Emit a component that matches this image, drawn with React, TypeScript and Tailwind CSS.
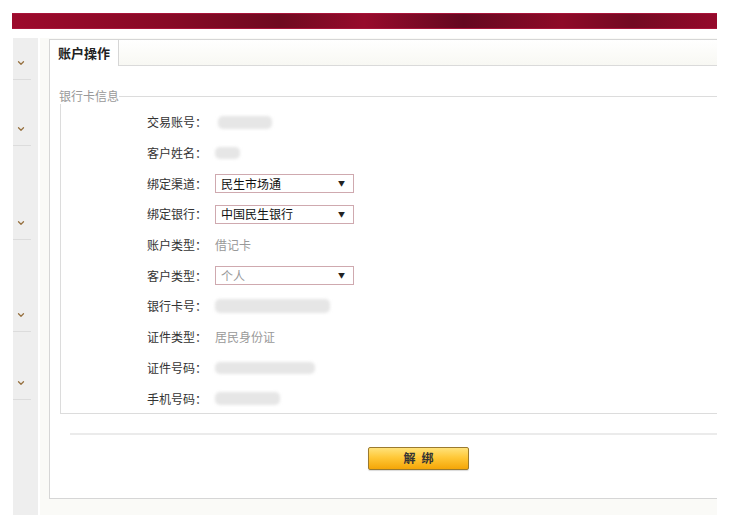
import React from "react"
import { ChevronDown } from "lucide-react"

const FONT = "font-['Noto_Sans_CJK_SC','Liberation_Sans',sans-serif]"

interface RowProps {
    label: string
    children?: React.ReactNode
}

function Row({ label, children }: RowProps) {
    return (
        <div className="flex items-center h-[30.7px]">
            <div className="w-[146px] text-right text-[12px] text-[#333]">{label}</div>
            <div className="ml-[8px] flex items-center">{children}</div>
        </div>
    )
}

function Blur({ w, h = 13 }: { w: number; h?: number }) {
    return <div className="bg-[#e6e6e6] rounded-[5px] blur-[1.5px]" style={{ width: w, height: h }} />
}

function Select({ value, muted }: { value: string; muted?: boolean }) {
    return (
        <div className="w-[139px] h-[19px] border border-[#cfa9af] bg-white flex items-center justify-between pl-[5px] pr-[8px]">
            <span className={muted ? "text-[12px] text-[#999]" : "text-[12px] text-[#111]"}>{value}</span>
            <span className="text-[7px] text-[#222] leading-none">▼</span>
        </div>
    )
}

const sideItems = [42, 66, 94, 92, 68]

export default function App() {
    return (
        <div className={`w-[750px] h-[515px] bg-white overflow-hidden ${FONT}`}>
            <div className="h-[13px]" />
            <div className="ml-[12px] w-[705px] h-[16px] border-y border-[#a8143a] bg-[linear-gradient(90deg,#9c0a2c_0%,#880a26_22%,#6f0a20_38%,#970b2c_50%,#650820_64%,#8e0a28_78%,#730a22_88%,#95092b_100%)]" />
            <div className="h-[9px]" />

            <div className="flex ml-[13px] w-[704px] h-[477px]">
                {/* sidebar */}
                <div className="w-[25px] bg-[#eeeeee] flex flex-col">
                    {sideItems.map((h, i) => (
                        <div
                            key={i}
                            className="flex flex-col justify-end items-start border-b border-[#dcdcdc] w-[18px] pb-[11px] pl-[3px]"
                            style={{ height: h }}
                        >
                            <ChevronDown className="w-[10px] h-[10px] text-[#96703f]" strokeWidth={3} />
                        </div>
                    ))}
                </div>
                <div className="w-[2px] bg-white" />
                <div className="w-[9px] bg-[#fafaf7]" />

                {/* main */}
                <div className="flex-1 flex flex-col bg-[#fafaf7] pt-[1px]">
                    <div className="h-[460px] border border-r-0 border-[#d6d6d6] bg-white flex flex-col">
                        {/* tab header */}
                        <div className="h-[26px] flex bg-[linear-gradient(180deg,#ffffff,#f8f8f3)] border-b border-[#dadada]">
                            <div className="w-[69px] h-[26px] bg-white border-r border-[#d6d6d6] -mb-[1px] flex items-center pl-[8px] text-[13px] font-bold text-[#222]">
                                账户操作
                            </div>
                        </div>

                        {/* fieldset */}
                        <fieldset className="mt-[22px] ml-[10px] border border-r-0 border-[#dcdcdc] h-[326px]">
                            <legend className="-ml-[2px] text-[12px] leading-[16px] text-[#999]">银行卡信息</legend>
                            <div className="pt-[3px]">
                                <Row label="交易账号：">
                                    <div className="ml-[3px]"><Blur w={54} /></div>
                                </Row>
                                <Row label="客户姓名：">
                                    <Blur w={25} h={12} />
                                </Row>
                                <Row label="绑定渠道：">
                                    <Select value="民生市场通" />
                                </Row>
                                <Row label="绑定银行：">
                                    <Select value="中国民生银行" />
                                </Row>
                                <Row label="账户类型：">
                                    <span className="text-[12px] text-[#999]">借记卡</span>
                                </Row>
                                <Row label="客户类型：">
                                    <Select value="个人" muted />
                                </Row>
                                <Row label="银行卡号：">
                                    <Blur w={115} h={14} />
                                </Row>
                                <Row label="证件类型：">
                                    <span className="text-[12px] text-[#999]">居民身份证</span>
                                </Row>
                                <Row label="证件号码：">
                                    <Blur w={100} h={12} />
                                </Row>
                                <Row label="手机号码：">
                                    <Blur w={65} h={13} />
                                </Row>
                            </div>
                        </fieldset>

                        <div className="mt-[19px] ml-[20px] h-[2px] bg-[#ebebeb]" />

                        <div className="mt-[9px] ml-[318px]">
                            <button className="w-[101px] h-[23px] rounded-[2px] border border-[#9b7a2e] bg-[linear-gradient(180deg,#ffe27a_0%,#ffc838_45%,#f5a607_100%)] text-[12px] font-bold text-[#333] tracking-[6px] pl-[6px] shadow-[0_1px_1px_rgba(0,0,0,0.15)]">
                                解绑
                            </button>
                        </div>
                    </div>
                </div>
            </div>
        </div>
    )
}
